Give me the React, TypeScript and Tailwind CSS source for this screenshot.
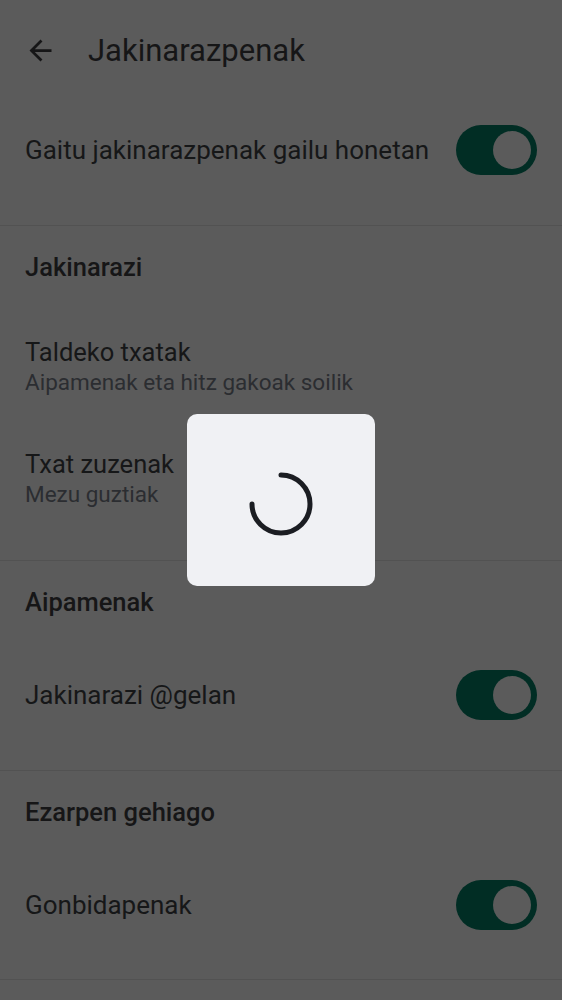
import React from "react";

const font = { fontFamily: "Roboto, 'Noto Sans', sans-serif" };

function Toggle() {
  return (
    <div className="w-[81px] h-[50px] rounded-full bg-[#012d24] flex items-center justify-end pr-[6px] shrink-0">
      <div className="w-[38px] h-[38px] rounded-full bg-[#5b5b5b]" />
    </div>
  );
}

function Divider() {
  return <div className="h-px w-full bg-[#525252]" />;
}

function Header({ text }: { text: string }) {
  return (
    <div className="h-[84px] flex items-center px-[25px]">
      <span className="text-[25.5px] font-medium text-[#161617] leading-none">{text}</span>
    </div>
  );
}

function ToggleRow({ text }: { text: string }) {
  return (
    <div className="h-[100px] flex items-center justify-between pl-[25px] pr-[25px]">
      <span className="text-[26px] text-[#161718] leading-none">{text}</span>
      <Toggle />
    </div>
  );
}

function TwoLineRow({ title, sub }: { title: string; sub: string }) {
  return (
    <div className="h-[112px] flex flex-col justify-center px-[25px]">
      <div className="text-[25.5px] leading-[30px] text-[#161718]">{title}</div>
      <div className="text-[22.5px] leading-[26px] mt-[2px] text-[#2b2d31]">{sub}</div>
    </div>
  );
}

export default function App() {
  return (
    <div className="relative w-[562px] h-[1000px] bg-[#5b5b5b] overflow-hidden" style={font}>
      <div className="h-[100px] flex items-center">
        <div className="w-[88px] flex items-center pl-[24px]">
          <svg width="33" height="33" viewBox="0 0 24 24" fill="#161617">
            <path d="M20 11H7.83l5.59-5.59L12 4l-8 8 8 8 1.41-1.41L7.83 13H20v-2z" />
          </svg>
        </div>
        <span className="text-[31px] text-[#161617] leading-none">Jakinarazpenak</span>
      </div>
      <ToggleRow text="Gaitu jakinarazpenak gailu honetan" />
      <div className="h-[25px]" />
      <Divider />
      <Header text="Jakinarazi" />
      <TwoLineRow title="Taldeko txatak" sub="Aipamenak eta hitz gakoak soilik" />
      <TwoLineRow title="Txat zuzenak" sub="Mezu guztiak" />
      <div className="h-[26px]" />
      <Divider />
      <Header text="Aipamenak" />
      <ToggleRow text="Jakinarazi @gelan" />
      <div className="h-[25px]" />
      <Divider />
      <Header text="Ezarpen gehiago" />
      <ToggleRow text="Gonbidapenak" />
      <div className="h-[24px]" />
      <Divider />

      <div className="absolute left-[187px] top-[414px] w-[188px] h-[172px] rounded-[10px] bg-[#f0f1f4] flex items-center justify-center">
        <svg width="66" height="66" viewBox="0 0 66 66" className="mt-[8px]">
          <path
            d="M33 4 A29 29 0 1 1 4 33"
            fill="none"
            stroke="#1b1d22"
            strokeWidth="5"
            strokeLinecap="round"
          />
        </svg>
      </div>
    </div>
  );
}
